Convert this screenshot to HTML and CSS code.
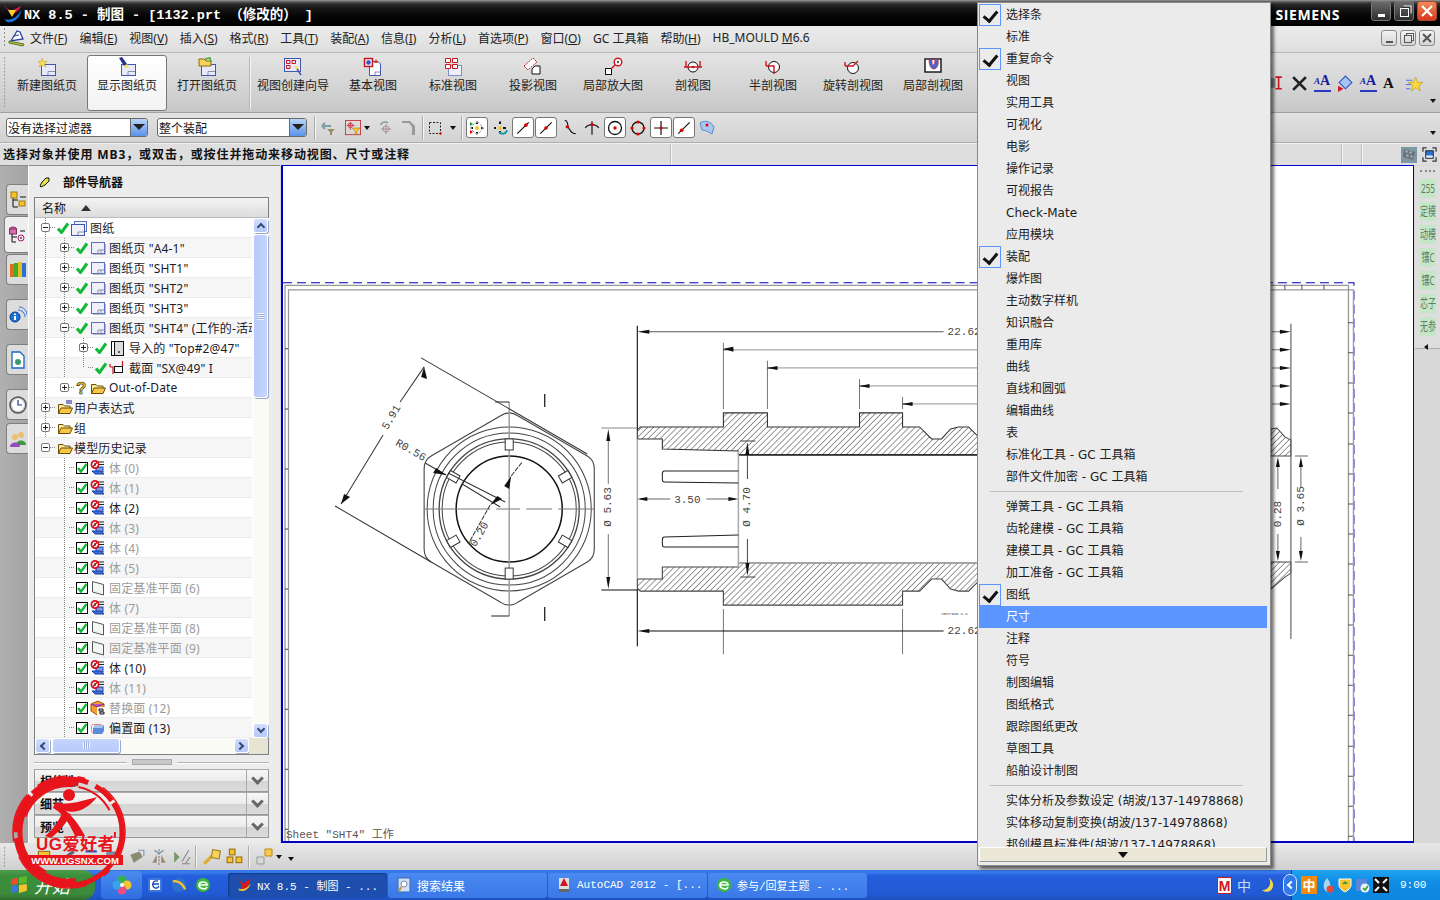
FILE: index.html
```html
<!DOCTYPE html>
<html lang="zh">
<head>
<meta charset="utf-8">
<title>NX 8.5 - 制图</title>
<link rel="stylesheet" href="styles.css">
</head>
<body>
<svg class="defs" width="0" height="0">
  <defs>
    <symbol id="ck" viewBox="0 0 12 12"><path d="M1 6.500 4.500 10.500 11 1.500" fill="none" stroke="#12b838" stroke-width="3"/></symbol>
    <symbol id="cb" viewBox="0 0 12 12"><rect x=".5" y=".5" width="11" height="11" fill="#fff" stroke="#000"/><path d="M2 6 5 9.500 10.500 2" fill="none" stroke="#12b838" stroke-width="2.400"/></symbol>
    <symbol id="pg" viewBox="0 0 16 16"><rect x="1.500" y="2.500" width="13" height="11" fill="#eef1fb" stroke="#5d6fc4"/><path d="M8 13.500V10H14.500M11 10V13.500" fill="none" stroke="#8a8fa8"/><path d="M15.500 4V14.500H3" fill="none" stroke="#b9b9c4"/></symbol>
    <symbol id="pgs" viewBox="0 0 16 16"><rect x="3.500" y="1.500" width="12" height="10" fill="#eef1fb" stroke="#5d6fc4"/><rect x=".5" y="4.500" width="13" height="11" fill="#eef1fb" stroke="#3f55b5"/><path d="M7 15V12H13" fill="none" stroke="#8a8fa8"/></symbol>
    <symbol id="fo" viewBox="0 0 16 16"><path d="M1.500 13.500V4.500H6L7.500 6H13V8" fill="#fbe9a0" stroke="#6b4e00"/><path d="M1.500 13.500 4 8H15.500L13 13.500Z" fill="#f7c64a" stroke="#6b4e00"/></symbol>
    <symbol id="bd" viewBox="0 0 16 16"><rect x="6" y="7" width="7" height="5" fill="#7d9de6" stroke="#1d3fa8"/><path d="M2 11H11L14 14H5Z" fill="#3f6fd8" stroke="#1d3fa8"/><path d="M8 2H14M9 4.500H14" stroke="#222"/><circle cx="5" cy="4.500" r="3.600" fill="#fff" stroke="#d8101c" stroke-width="1.700"/><path d="M2.500 7 7.500 2" stroke="#d8101c" stroke-width="1.500"/><path d="M5 3V6" stroke="#222"/></symbol>
    <symbol id="dp" viewBox="0 0 16 16"><path d="M2.500 1.500 13.500 4.500V15L2.500 12Z" fill="#f1f7f1" stroke="#555"/></symbol>
    <symbol id="tb" viewBox="0 0 22 20"><rect x="5.500" y="7.500" width="14" height="11" fill="#e6eafa" stroke="#4357b0"/><path d="M12 18V14.500H19" fill="none" stroke="#8b8fa8"/></symbol>
    <symbol id="pt" viewBox="0 0 14 14"><path d="M2 12 12 2" stroke="#111"/><circle cx="9.500" cy="4.500" r="1.600" fill="#e00000"/></symbol>
    <symbol id="grip" viewBox="0 0 4 60"><path d="M1.500 0V60" stroke="#8d8d8d" stroke-dasharray="2 2"/></symbol>
  </defs>
</svg>

<header class="titlebar">
  <svg class="tlogo" viewBox="0 0 20 20"><path d="M1 1 9 7 19 2C17 7 14 9 10 10 8 7 5 5 1 1Z" fill="#d41c4c"/><path d="M2 15C8 17 15 14 19 6 19 13 12 20 5 18Z" fill="#1b6ecf"/><path d="M6 6 14 6 10 13Z" fill="#ffcf2c"/></svg>
  <span class="ttext">NX 8.5 - 制图 - [1132.prt （修改的） ]</span>
  <span class="brand">SIEMENS</span>
  <span class="wbtn"><i class="g-min"></i></span>
  <span class="wbtn"><i class="g-res"></i></span>
  <span class="wbtn close"><svg viewBox="0 0 12 12" class="x12"><path d="M1 1 11 11M11 1 1 11" stroke="#fff" stroke-width="2.200"/></svg></span>
</header>

<nav class="menubar">
  <svg class="grip14" viewBox="0 0 4 20"><path d="M1.500 0V20" stroke="#8d8d8d" stroke-dasharray="2 2"/></svg>
  <svg class="mlogo" viewBox="0 0 18 18"><path d="M3 12 9 2 12 3 15 10Z" fill="#fff" stroke="#2b3f9e" stroke-width="1.300"/><path d="M1 12 16 15 15 17 1 14Z" fill="#e0b83c" stroke="#4a7a2a"/><path d="M6 7 11 6" stroke="#2b3f9e"/></svg>
  <div class="mitems">
    <span>文件(<u>F</u>)</span><span>编辑(<u>E</u>)</span><span>视图(<u>V</u>)</span><span>插入(<u>S</u>)</span><span>格式(<u>R</u>)</span><span>工具(<u>T</u>)</span><span>装配(<u>A</u>)</span><span>信息(<u>I</u>)</span><span>分析(<u>L</u>)</span><span>首选项(<u>P</u>)</span><span>窗口(<u>O</u>)</span><span>GC 工具箱</span><span>帮助(<u>H</u>)</span><span>HB_MOULD <u>M</u>6.6</span>
  </div>
  <div class="mdi">
    <span class="mbtn"><i class="m-min"></i></span><span class="mbtn"><i class="m-res"></i></span>
    <span class="mbtn"><svg viewBox="0 0 10 10" class="x10"><path d="M1 1 9 9M9 1 1 9" stroke="#555" stroke-width="2"/></svg></span>
  </div>
</nav>

<section class="bigbar">
  <svg class="grip60" viewBox="0 0 4 60"><use href="#grip"/></svg>
  <div class="bb"><svg class="bi" viewBox="0 0 22 20"><use href="#tb"/><path d="M6 1 7.500 5 11 4 8.500 7 10 10 6.500 8 3 10 4.500 7 2 4 5 5Z" fill="#ffe14a" stroke="#b9a020" stroke-width=".5"/></svg><span>新建图纸页</span></div>
  <div class="bb on"><svg class="bi" viewBox="0 0 22 20"><use href="#tb"/><path d="M3 1 6 0 11 7 8 9Z" fill="#23308f"/><path d="M8 9 11 7 13 11 9 11Z" fill="#f2e26a"/></svg><span>显示图纸页</span></div>
  <div class="bb"><svg class="bi" viewBox="0 0 22 20"><use href="#tb"/><path d="M3 9V2H8L10 4H15V9Z" fill="#f7d35c" stroke="#8a6a10"/><path d="M9 2 14 1 15 5" fill="none" stroke="#3fae2c" stroke-width="1.500"/></svg><span>打开图纸页</span></div>
  <span class="bsep"></span>
  <div class="bb"><svg class="bi" viewBox="0 0 22 20"><rect x="2.500" y="1.500" width="16" height="13" fill="#e6eafa" stroke="#4357b0"/><path d="M4.500 3.500H8V6.500H4.500ZM10 3.500H13.500V6.500H10ZM4.500 8.500H8V11.500H4.500Z" fill="none" stroke="#c8141c"/><path d="M12 9 15 9 17 13 14 12Z" fill="#ffe14a"/><path d="M15 12 19 18" stroke="#4357b0" stroke-width="1.500"/></svg><span>视图创建向导</span></div>
  <div class="bb"><svg class="bi" viewBox="0 0 22 20"><path d="M7.500 4.500H16L18.500 7V18.500H7.500Z" fill="#fff" stroke="#4357b0"/><path d="M13 18V15H18" fill="none" stroke="#8b8fa8"/><rect x="2.500" y="1.500" width="8" height="8" fill="#e6eafa" stroke="#c8141c" stroke-width="1.400"/><circle cx="6.500" cy="5.500" r="2.200" fill="#3553c8"/><path d="M14 2 16 6H12Z" fill="#d8401c"/></svg><span>基本视图</span></div>
  <div class="bb"><svg class="bi" viewBox="0 0 22 20"><rect x="6.500" y="8.500" width="13" height="10" fill="#eef1fb" stroke="#7f8ccf"/><path d="M3.500 1.500H8.500V5.500H3.500ZM10.500 1.500H15.500V5.500H10.500ZM3.500 7.500H8.500V11.500H3.500ZM10.500 7.500H15.500V11.500H10.500Z" fill="#fff" stroke="#c8141c"/></svg><span>标准视图</span></div>
  <div class="bb"><svg class="bi" viewBox="0 0 22 20"><path d="M2 9 11 1 15 5 6 13Z" fill="#fff" stroke="#d01420" stroke-dasharray="2 1"/><path d="M10 17V12L13 9H18V17Z" fill="#fff" stroke="#111"/></svg><span>投影视图</span></div>
  <div class="bb"><svg class="bi" viewBox="0 0 22 20"><rect x="3.500" y="11.500" width="6" height="6" fill="#fff" stroke="#111"/><path d="M9 12 14 7" stroke="#d01420" stroke-width="1.400"/><circle cx="16" cy="5" r="3.800" fill="#fff" stroke="#d01420" stroke-width="1.400"/><circle cx="16" cy="5" r="1.200" fill="#555"/></svg><span>局部放大图</span></div>
  <div class="bb"><svg class="bi" viewBox="0 0 22 20"><circle cx="11" cy="10" r="5" fill="#fff" stroke="#111"/><circle cx="11" cy="10" r="1.300" fill="#333"/><path d="M2 10H20M4 10V4M18 10V4" fill="none" stroke="#d01420" stroke-width="1.400"/></svg><span>剖视图</span></div>
  <div class="bb"><svg class="bi" viewBox="0 0 22 20"><circle cx="12" cy="10" r="5.500" fill="#fff" stroke="#111"/><path d="M4 9H12V17M4 9V4" fill="none" stroke="#d01420" stroke-width="1.400"/></svg><span>半剖视图</span></div>
  <div class="bb"><svg class="bi" viewBox="0 0 22 20"><circle cx="11" cy="11" r="5.500" fill="#fff" stroke="#111"/><path d="M3 9H11L16 4M3 9V5" fill="none" stroke="#d01420" stroke-width="1.400"/></svg><span>旋转剖视图</span></div>
  <div class="bb"><svg class="bi" viewBox="0 0 22 20"><rect x="3" y="2" width="16" height="13" fill="#fff" stroke="#111" stroke-width="1.400"/><path d="M7 2C7 9 9 12 12 12S17 8 16 2H13C13 6 12 8 11 8S10 5 10 2Z" fill="#4a66cc" stroke="#d01420" stroke-width=".6"/></svg><span>局部剖视图</span></div>
  <div class="rgroup">
    <svg class="ri" viewBox="0 0 16 16"><rect x="0" y="3" width="7" height="9" fill="#8a8a8a"/><path d="M10 2V13M7 2H13M7 13H13" stroke="#c8141c" stroke-width="1.500"/></svg>
    <svg class="ri" viewBox="0 0 16 16"><path d="M2 2 14 14M14 2 2 14" stroke="#222" stroke-width="2.600"/></svg>
    <span class="ria">A<i>A</i></span>
    <svg class="ri" viewBox="0 0 16 16"><path d="M8 1 14 7 8 13 2 7Z" fill="#a8c4f4" stroke="#2b52c0"/><path d="M1 10 6 13 1 16Z" fill="#d01420"/></svg>
    <span class="ria">A<i>A</i></span>
    <span class="rib">A</span>
    <svg class="ri" viewBox="0 0 16 16"><path d="M9 2 11 7H16L12 10 13.500 15 9 12 5 15 6.500 10 2 7H7Z" fill="#ffd93a" stroke="#b08a10" stroke-width=".5"/><path d="M0 5H6M0 9H5M0 13H4" stroke="#4a7ae0"/></svg>
  </div>
  <i class="more"></i>
</section>

<section class="selbar">
  <div class="combo c1"><span>没有选择过滤器</span><b></b></div>
  <div class="combo c2"><span>整个装配</span><b></b></div>
  <span class="vsep s1"></span>
  <span class="ti"><svg viewBox="0 0 16 16"><path d="M2 6H11M2 6 5 3M2 6 5 9" stroke="#7e9ca8" stroke-width="2" fill="none"/><path d="M7 9H15L12 12V15H10V12Z" fill="#9a8a6a"/></svg></span>
  <span class="ti m3"><svg viewBox="0 0 18 18"><rect x=".5" y=".5" width="17" height="16" fill="none" stroke="#c8323c"/><path d="M6 2V11M2 6H11" stroke="#c8323c"/><circle cx="6" cy="6" r="2.500" fill="none" stroke="#c8323c"/><path d="M8 9H17L13.500 12.500V16H11.500V12.500Z" fill="#f4c430" stroke="#8a6a10" stroke-width=".5"/></svg></span>
  <i class="dn d1"></i>
  <span class="ti m5"><svg viewBox="0 0 16 16"><circle cx="8" cy="9" r="3" fill="none" stroke="#a89aa0"/><path d="M8 4V14M3 9H13" stroke="#b08a8a"/><path d="M3 5C3 2 8 1 10 3" stroke="#7e9ca8" stroke-width="1.500" fill="none"/></svg></span>
  <span class="ti"><svg viewBox="0 0 16 16"><path d="M1 3 8 3 11 7V15H14V6L9 1 1 1Z" fill="#9a9a9a"/></svg></span>
  <span class="vsep s2"></span>
  <span class="ti"><svg viewBox="0 0 16 16"><rect x="2.500" y="2.500" width="11" height="11" fill="none" stroke="#222" stroke-dasharray="2 1.500"/><circle cx="13.500" cy="13.500" r="1.200" fill="#e00000"/></svg></span>
  <i class="dn d2"></i>
  <span class="vsep s3"></span>
  <span class="ti box"><svg viewBox="0 0 16 16"><path d="M8 1 15 8 8 15 1 8Z" fill="none" stroke="#777" stroke-dasharray="1 1"/><circle cx="8" cy="8" r="2" fill="#f4c430"/><path d="M8 2.500V4M8 12V13.500M2.500 8H4M12 8H13.500" stroke="#111" stroke-width="2"/><path d="M1 2 4 4 1 6Z" fill="#10a030"/><path d="M1 10 4 12 1 14Z" fill="#e00000"/></svg></span>
  <span class="ti"><svg viewBox="0 0 16 16"><path d="M8 1.500V4M8 11V13.500M2 8H4M11 8H14" stroke="#111" stroke-width="2"/><circle cx="8" cy="8" r="2" fill="#f4c430"/><path d="M7 12C10 15 14 14 15 10" stroke="#1a9a9a" stroke-width="2" fill="none"/></svg></span>
  <span class="ti box"><svg viewBox="0 0 14 14"><use href="#pt"/></svg></span>
  <span class="ti box"><svg viewBox="0 0 14 14"><path d="M2 12 12 2" stroke="#111"/><circle cx="7" cy="7" r="1.600" fill="#e00000"/></svg></span>
  <span class="ti"><svg viewBox="0 0 14 14"><path d="M3 0C7 0 5 7 8 9 9 11 11 12 13 12" stroke="#111" fill="none"/><circle cx="5.500" cy="6" r="1.500" fill="#e00000"/></svg></span>
  <span class="ti"><svg viewBox="0 0 14 14"><path d="M1 7C4 3 10 3 13 7M7 1V13" stroke="#111" fill="none"/><circle cx="7" cy="4" r="1.400" fill="#e00000"/></svg></span>
  <span class="ti box"><svg viewBox="0 0 16 16"><circle cx="8" cy="8" r="6.500" fill="none" stroke="#111" stroke-width="1.300"/><circle cx="8" cy="8" r="1.700" fill="#e00000"/></svg></span>
  <span class="ti"><svg viewBox="0 0 16 16"><circle cx="8" cy="8" r="6" fill="none" stroke="#111" stroke-width="1.300"/><g fill="#e00000"><circle cx="8" cy="2" r="1.600"/><circle cx="8" cy="14" r="1.600"/><circle cx="2" cy="8" r="1.600"/><circle cx="14" cy="8" r="1.600"/></g></svg></span>
  <span class="ti box"><svg viewBox="0 0 16 16"><path d="M8 1V15M1 8H15" stroke="#111" stroke-width="1.200"/><circle cx="8" cy="8" r="1.500" fill="#e00000"/></svg></span>
  <span class="ti box"><svg viewBox="0 0 14 14"><path d="M2 12 12 2" stroke="#111"/><circle cx="5" cy="9" r="1.600" fill="#e00000"/></svg></span>
  <span class="ti"><svg viewBox="0 0 16 16"><path d="M1 3C5 0 12 1 15 7L13 14C9 11 4 10 3 10Z" fill="#a8c8f0" stroke="#5a8ad0"/><circle cx="8" cy="5" r="1.500" fill="#e00000"/></svg></span>
  <i class="more m2"></i>
</section>

<section class="cue">
  <strong>选择对象并使用 MB3，或双击，或按住并拖动来移动视图、尺寸或注释</strong>
  <span class="cdiv d-a"></span><span class="cdiv d-b"></span><span class="cdiv d-c"></span>
  <svg class="flag" viewBox="0 0 16 16"><rect width="16" height="16" fill="#7d98a4"/><path d="M3 2 14 5 12 13 2 10Z" fill="#68727a"/><path d="M5 3 7 4 6 6 4 5ZM9 4 11 5 10 7 8 6ZM6 7 8 8 7 10 5 9ZM10 8 12 9 11 11 9 10Z" fill="#a8b0b4"/></svg>
  <svg class="fit" viewBox="0 0 16 16"><path d="M1 5V1H5M11 1H15V5M15 11V15H11M5 15H1V11" fill="none" stroke="#333" stroke-width="1.300"/><rect x="4" y="4" width="8" height="8" fill="#2f6fd0" stroke="#222"/><rect x="4.500" y="9" width="7" height="2.500" fill="#dfe8f8"/></svg>
</section>

<main class="work">
  <aside class="tabs">
    <div class="tab"><svg viewBox="0 0 18 18"><path d="M4 7V16M4 9H9M4 16H9M11 6H17" fill="none" stroke="#111"/><rect x="2" y="1" width="6" height="6" fill="#f4c430" stroke="#9a7a10"/><rect x="10" y="10" width="6" height="5" fill="#f4c430" stroke="#9a7a10"/></svg></div>
    <div class="tab active"><svg viewBox="0 0 18 18"><ellipse cx="5" cy="3" rx="3.500" ry="2" fill="#d66cae" stroke="#803060"/><rect x="1.500" y="3" width="7" height="5" fill="#d66cae" stroke="#803060"/><path d="M4 8V16M4 11H9M4 16H8M12 5H17" stroke="#111" fill="none"/><circle cx="13" cy="12" r="3" fill="none" stroke="#a02070"/><circle cx="13" cy="12" r="1" fill="#a02070"/></svg></div>
    <div class="tab"><svg viewBox="0 0 18 18"><rect x="1" y="3" width="4" height="13" fill="#e66a1c"/><rect x="5" y="2" width="4" height="14" fill="#3fae2c"/><rect x="9" y="1" width="4" height="15" fill="#e6c11c"/><rect x="13" y="2" width="4" height="14" fill="#2b6fd8"/></svg></div>
    <div class="tab g1"><svg viewBox="0 0 18 18"><circle cx="6" cy="11" r="5" fill="#1c72d8" stroke="#0a3a8a"/><rect x="5" y="10" width="2" height="4" fill="#fff"/><rect x="5" y="7.500" width="2" height="1.500" fill="#fff"/><path d="M9 4C13 4 16 7 16 11M10 1C15 1 18 5 18 9" fill="none" stroke="#2b70d8"/></svg></div>
    <div class="tab g1"><svg viewBox="0 0 18 18"><path d="M3 1H11L15 5V17H3Z" fill="#fff" stroke="#1a66c8" stroke-width="1.300"/><circle cx="9" cy="11" r="3" fill="#3a9a6a"/></svg></div>
    <div class="tab g1"><svg viewBox="0 0 18 18"><circle cx="9" cy="9" r="8" fill="#c8d4dc" stroke="#555" stroke-width="1.500"/><circle cx="9" cy="9" r="6" fill="#fff"/><path d="M9 4V9H13" fill="none" stroke="#1a3a8a" stroke-width="1.200"/></svg></div>
    <div class="tab g2"><svg viewBox="0 0 18 18"><circle cx="12" cy="5" r="3" fill="#e8c070"/><path d="M7 15C7 9 17 9 17 15Z" fill="#3a9a3a"/><circle cx="6" cy="7" r="3" fill="#e8c070"/><path d="M1 17C1 11 11 11 11 17Z" fill="#9a4ac0"/></svg></div>
  </aside>

  <section class="panel">
    <div class="phead">
      <svg class="pico" viewBox="0 0 12 12"><path d="M1 10 3 6 7 2 10 2 10 5 6 9 2 11Z" fill="#e8e04a" stroke="#111"/></svg>
      <strong>部件导航器</strong>
    </div>
    <div class="tree">
      <div class="thead"><span>名称</span><i class="up"></i></div>
      <div class="tbody">
        <div class="rows">
          <div class="row v0 l0"><span class="exp minus"></span><span class="dash"></span><svg class="c"><use href="#ck"/></svg><svg class="ic"><use href="#pgs"/></svg><span class="t">图纸</span></div>
          <div class="row alt v01 l1"><span class="exp plus"></span><span class="dash"></span><svg class="c"><use href="#ck"/></svg><svg class="ic"><use href="#pg"/></svg><span class="t">图纸页 "A4-1"</span></div>
          <div class="row v01 l1"><span class="exp plus"></span><span class="dash"></span><svg class="c"><use href="#ck"/></svg><svg class="ic"><use href="#pg"/></svg><span class="t">图纸页 "SHT1"</span></div>
          <div class="row alt v01 l1"><span class="exp plus"></span><span class="dash"></span><svg class="c"><use href="#ck"/></svg><svg class="ic"><use href="#pg"/></svg><span class="t">图纸页 "SHT2"</span></div>
          <div class="row v01 l1"><span class="exp plus"></span><span class="dash"></span><svg class="c"><use href="#ck"/></svg><svg class="ic"><use href="#pg"/></svg><span class="t">图纸页 "SHT3"</span></div>
          <div class="row alt v01 l1"><span class="exp minus"></span><span class="dash"></span><svg class="c"><use href="#ck"/></svg><svg class="ic"><use href="#pg"/></svg><span class="t">图纸页 "SHT4" (工作的-活动的)</span></div>
          <div class="row v012 l2"><span class="exp plus"></span><span class="dash"></span><svg class="c"><use href="#ck"/></svg><svg class="ic"><rect x="2.500" y="1.500" width="12" height="14" fill="#ddd" stroke="#111"/><rect x="2.500" y="1.500" width="3" height="14" fill="#fff" stroke="#111"/><circle cx="10" cy="12" r="1" fill="#333"/></svg><span class="t s2">导入的 "Top#2@47"</span></div>
          <div class="row alt v012e l2"><span class="exp none"></span><span class="dash"></span><svg class="c"><use href="#ck"/></svg><svg class="ic"><path d="M1 7H4V14M1 7V4" stroke="#c8141c" fill="none" stroke-width="1.200"/><rect x="5.500" y="6.500" width="8" height="6" fill="#fff" stroke="#111"/><path d="M13.500 6V1" stroke="#c8141c" stroke-width="1.200"/></svg><span class="t s2">截面 "SX@49" I</span></div>
          <div class="row v0 l1"><span class="exp plus"></span><span class="dash"></span><svg class="c q" viewBox="0 0 12 16"><text x="0" y="14" class="qm">?</text></svg><svg class="ic"><use href="#fo"/></svg><span class="t">Out-of-Date</span></div>
          <div class="row alt v0 l0"><span class="exp plus"></span><span class="dash"></span><svg class="ic fo0"><use href="#fo"/><path d="M9 1H15M9 3H15" stroke="#1a1a8a"/></svg><span class="t">用户表达式</span></div>
          <div class="row v0 l0"><span class="exp plus"></span><span class="dash"></span><svg class="ic fo0"><use href="#fo"/></svg><span class="t">组</span></div>
          <div class="row alt l0"><span class="exp minus"></span><span class="dash"></span><svg class="ic fo0"><use href="#fo"/></svg><span class="t">模型历史记录</span></div>
          <div class="row v1 l1"><span class="exp none"></span><span class="dash"></span><svg class="c"><use href="#cb"/></svg><svg class="ic"><use href="#bd"/></svg><span class="t dim">体 (0)</span></div>
          <div class="row alt v1 l1"><span class="exp none"></span><span class="dash"></span><svg class="c"><use href="#cb"/></svg><svg class="ic"><use href="#bd"/></svg><span class="t dim">体 (1)</span></div>
          <div class="row v1 l1"><span class="exp none"></span><span class="dash"></span><svg class="c"><use href="#cb"/></svg><svg class="ic"><use href="#bd"/></svg><span class="t">体 (2)</span></div>
          <div class="row alt v1 l1"><span class="exp none"></span><span class="dash"></span><svg class="c"><use href="#cb"/></svg><svg class="ic"><use href="#bd"/></svg><span class="t dim">体 (3)</span></div>
          <div class="row v1 l1"><span class="exp none"></span><span class="dash"></span><svg class="c"><use href="#cb"/></svg><svg class="ic"><use href="#bd"/></svg><span class="t dim">体 (4)</span></div>
          <div class="row alt v1 l1"><span class="exp none"></span><span class="dash"></span><svg class="c"><use href="#cb"/></svg><svg class="ic"><use href="#bd"/></svg><span class="t dim">体 (5)</span></div>
          <div class="row v1 l1"><span class="exp none"></span><span class="dash"></span><svg class="c"><use href="#cb"/></svg><svg class="ic"><use href="#dp"/></svg><span class="t dim">固定基准平面 (6)</span></div>
          <div class="row alt v1 l1"><span class="exp none"></span><span class="dash"></span><svg class="c"><use href="#cb"/></svg><svg class="ic"><use href="#bd"/></svg><span class="t dim">体 (7)</span></div>
          <div class="row v1 l1"><span class="exp none"></span><span class="dash"></span><svg class="c"><use href="#cb"/></svg><svg class="ic"><use href="#dp"/></svg><span class="t dim">固定基准平面 (8)</span></div>
          <div class="row alt v1 l1"><span class="exp none"></span><span class="dash"></span><svg class="c"><use href="#cb"/></svg><svg class="ic"><use href="#dp"/></svg><span class="t dim">固定基准平面 (9)</span></div>
          <div class="row v1 l1"><span class="exp none"></span><span class="dash"></span><svg class="c"><use href="#cb"/></svg><svg class="ic"><use href="#bd"/></svg><span class="t">体 (10)</span></div>
          <div class="row alt v1 l1"><span class="exp none"></span><span class="dash"></span><svg class="c"><use href="#cb"/></svg><svg class="ic"><use href="#bd"/></svg><span class="t dim">体 (11)</span></div>
          <div class="row v1 l1"><span class="exp none"></span><span class="dash"></span><svg class="c"><use href="#cb"/></svg><svg class="ic"><path d="M1 4 8 1 14 4V11L7 15 1 11Z" fill="#f4a030" stroke="#a05010"/><path d="M1 4 7 7 14 4" fill="#c050c0" stroke="#803080"/><rect x="7" y="7" width="8" height="8" fill="#fff"/><path d="M9 9H13V11H9ZM10 12H14V14H10Z" fill="none" stroke="#111"/></svg><span class="t dim">替换面 (12)</span></div>
          <div class="row alt v1 l1"><span class="exp none"></span><span class="dash"></span><svg class="c"><use href="#cb"/></svg><svg class="ic"><rect x="1.500" y="4.500" width="11" height="8" rx="2" fill="#fff" stroke="#f08080"/><path d="M5 5H14V11L12 14H3V8Z" fill="#5a8ae0"/><path d="M5 5 3 8H12L14 5" fill="#a8c4f4"/></svg><span class="t">偏置面 (13)</span></div>
        </div>
        <div class="vscroll">
          <span class="sb"><i class="ch-up"></i></span>
          <span class="thumb"><i class="ridges"></i></span>
          <span class="track"></span>
          <span class="sb"><i class="ch-dn"></i></span>
        </div>
      </div>
      <div class="hscroll">
        <span class="sb"><i class="ch-l"></i></span>
        <span class="hthumb"><i class="hridges"></i></span>
        <span class="htrack"></span>
        <span class="sb"><i class="ch-r"></i></span>
        <span class="corner"></span>
      </div>
    </div>
    <div class="split"><span></span><b></b><span></span></div>
    <div class="acc"><strong>相依性</strong><em><i class="chev"></i></em></div>
    <div class="acc"><strong>细节</strong><em><i class="chev"></i></em></div>
    <div class="acc"><strong>预览</strong><em><i class="chev"></i></em></div>
  </section>

  <section class="gfx">
    <svg class="sheet" viewBox="283 168 1129 673">
      <defs>
        <pattern id="h" width="4.200" height="4.200" patternUnits="userSpaceOnUse" patternTransform="rotate(45)"><rect width="5" height="5" fill="#fff"/><path d="M0 0V5" stroke="#555" stroke-width="1.200"/></pattern>
      </defs>
      <!-- sheet frame -->
      <g fill="none">
        <path d="M283 284H1353V843" stroke="#0000c0" stroke-dasharray="9 5"/>
        <path d="M285 843V286.500H1347.500V843M288.500 843V291H1352.500V843" stroke="#999" stroke-width="1.300"/>
        <path d="M1347 324H1352M1347 354H1352M1347 384H1352M1347 414H1352M1347 445H1352M1347 475H1352M1347 505H1352M1347 535H1352M1347 565H1352M1347 596H1352M1347 626H1352M1347 656H1352M1347 686H1352M1347 716H1352M1347 747H1352M1347 777H1352M1347 807H1352M1347 837H1352" stroke="#555"/>
        <path d="M1301 286V291M1323 286V291M1284 286V291M1054 286V291" stroke="#555"/>
        <path d="M285 590H288M285 650H288M285 710H288M285 770H288M285 830H288M285 530H288M285 470H288M285 410H288M285 350H288" stroke="#444"/>
      </g>
      <!-- hex view -->
      <g fill="none" stroke="#444" stroke-width="1">
        <path d="M500 417Q509 411 518 417L587 457Q594 461 594 470V550Q594 559 587 563L518 603Q509 609 500 603L431 563Q424 559 424 550V470Q424 461 431 457Z" stroke-width="1.100"/>
        <circle cx="509" cy="510" r="82"/><circle cx="509" cy="510" r="76"/><circle cx="509" cy="510" r="70" stroke-width="1.300"/><circle cx="509" cy="510" r="67"/><circle cx="509" cy="510" r="53" stroke="#111" stroke-width="1.500"/>
        <path d="M424 510H490M496 510H520M526 510H552M558 510H594" stroke="#777"/>
        <path d="M509 403V617" stroke="#999" stroke-width="1.400"/>
        <path d="M495 403H509M491 617H509" stroke="#222"/>
        <g fill="#fff" stroke="#333">
          <rect x="505" y="440" width="8" height="11"/><rect x="505" y="569" width="8" height="11"/>
          <rect x="505" y="440" width="8" height="11" transform="rotate(60 509 510)"/><rect x="505" y="440" width="8" height="11" transform="rotate(120 509 510)"/><rect x="505" y="440" width="8" height="11" transform="rotate(240 509 510)"/><rect x="505" y="440" width="8" height="11" transform="rotate(300 509 510)"/>
        </g>
        <path d="M544.500 395V408M544.500 608V622" stroke="#111" stroke-width="1.200"/>
        <path d="M421 359 587 455M335 507 431 563" stroke="#333"/>
        <path d="M400 403 424 368M341 505 383 436" stroke="#333"/>
        <path d="M448 474 505 503M462 485 500 508" stroke="#333"/>
        <path d="M425 464 446 476" stroke="#333"/>
        <path d="M511 477 522 463M490 506 468 545" stroke="#333" stroke-dasharray="5 1"/>
      </g>
      <g fill="#111"><path d="M424 368 421 378 427 380ZM341 505 344 495 350 498ZM446 476 436 469 433 474ZM511 477 504 487 509 490ZM490 506 497 497 502 500Z"/></g>
      <g class="cad">
        <text transform="translate(394 420) rotate(-60)" text-anchor="middle">5.91</text>
        <text transform="translate(409 454) rotate(30)" text-anchor="middle">R0.56</text>
        <text transform="translate(482 537) rotate(-60)" text-anchor="middle">0.20</text>
        <text transform="translate(611 508) rotate(-90)" text-anchor="middle">Ø 5.63</text>
        <text transform="translate(750 508) rotate(-90)" text-anchor="middle">Ø 4.70</text>
        <text x="687" y="504" text-anchor="middle">3.50</text>
        <text x="947" y="336">22.62</text>
        <text x="947" y="635">22.62</text>
        <text transform="translate(1280 515) rotate(-90)" text-anchor="middle">0.28</text>
        <text transform="translate(1303 507) rotate(-90)" text-anchor="middle">Ø 3.65</text>
        <text x="941" y="616" class="tiny">SECTION C-C</text>
        <text x="286" y="839" class="sheetcap">Sheet "SHT4" 工作</text>
      </g>
      <!-- section view -->
      <path d="M637 440V431L640 428H723V414H767V428H859V414H902V428H919L931 440H941L950 430 958 428H968L980 440V456H738V452L662 450V440Z" fill="url(#h)" stroke="#333" stroke-width="1.100"/>
      <path d="M637 580V589L640 592H723V606H902V592H919L931 580H941L950 590 958 592H968L980 580V564H738V568H662V580Z" fill="url(#h)" stroke="#444" stroke-width="1.100"/>
      <path d="M1270 430 1276 429 1284 438 1290 441V457H1270ZM1270 590 1284 578 1290 574V563H1270Z" fill="url(#h)" stroke="#444"/>
      <g fill="none" stroke="#222">
        <path d="M738 456H980" stroke="#111" stroke-width="1.300"/>
        <path d="M738 564H980" stroke="#aaa" stroke-width="1.300"/>
        <path d="M637 440V580M738 452V568" stroke="#aaa" stroke-width="1.500"/>
        <path d="M738 472H664Q662 472 662 475V480Q662 483 664 483L738 484M738 536 664 538Q662 538 662 541V545Q662 548 664 548H738"/>
        <path d="M637 327V431M637 590V647" stroke="#111" stroke-width="1.100"/>
        <path d="M723 344V410M767 362V410M859 380V410M902 398V410M723 610V655M902 610V655" stroke="#777"/>
        <path d="M647 333H943" stroke="#555"/>
        <path d="M733 351H980M777 369H980M869 387H980M912 405H980" stroke="#aaa" stroke-width="1.300"/>
        <path d="M733 351H723M777 369H767M869 387H859M912 405H902" stroke="#111"/>
        <path d="M647 632H943" stroke="#111"/>
        <path d="M1271 333H1280M1271 351H1280M1271 369H1280M1271 387H1280M1271 405H1280" stroke="#777"/>
        <path d="M1290 325V640" stroke="#666" stroke-width="1.200"/>
        <path d="M601 429H637" stroke="#888"/><path d="M601 591H637" stroke="#111"/>
        <path d="M608 440V485M608 535V580" stroke="#777"/>
        <path d="M640 500H670M706 500H735" stroke="#666"/>
        <path d="M747 456V480M747 540V566M740 442H755M740 578H755" stroke="#444"/>
        <path d="M1277 463V490M1277 535V556M1300 462V488M1300 538V558M1294 457H1307M1294 563H1307" stroke="#666"/>
      </g>
      <g fill="#111"><path d="M637 333 649 331V335ZM637 632 649 630V634ZM637 500 647 498V502ZM738 500 728 498V502ZM608 430 606 442H610ZM608 590 606 578H610ZM747 443 745 456H749ZM747 577 745 564H749ZM1290 333 1279 331V335ZM1290 351 1279 349V353ZM1290 369 1279 367V371ZM1290 387 1279 385V389ZM1290 405 1279 403V407ZM1277 458 1275 468H1279ZM1277 562 1275 552H1279ZM1300 458 1298 468H1302ZM1300 562 1298 552H1302Z"/><path d="M723 350 733 348V353Z"/><path d="M767 369 777 367V371ZM859 387 869 385V389ZM902 405 912 403V407Z"/></g>
    </svg>
  </section>

  <aside class="rstrip">
    <div class="rbox">
      <span class="rgrip"></span>
      <span class="gt">255</span><span class="gt">定模</span><span class="gt">动模</span><span class="gt">镶C</span><span class="gt">镶C</span><span class="gt">芯子</span><span class="gt">无参</span>
      <i class="lft"></i>
    </div>
  </aside>
</main>

<footer class="btool">
  <svg class="grip22" viewBox="0 0 4 22"><path d="M1.500 0V22" stroke="#8d8d8d" stroke-dasharray="2 2"/></svg>
  <span class="bt spa"><svg viewBox="0 0 16 16"><rect x="3" y="3" width="10" height="10" fill="#f4c430" stroke="#a07010"/></svg></span>
  <span class="bt"><svg viewBox="0 0 16 16"><path d="M2 12 14 3" stroke="#667" stroke-width="3"/></svg></span>
  <span class="bt"><svg viewBox="0 0 16 16"><rect x="2" y="6" width="10" height="8" fill="#f4c430"/><path d="M4 3H14" stroke="#2b52c0" stroke-width="2"/></svg></span>
  <span class="bt"><svg viewBox="0 0 16 16"><rect x="2" y="3" width="12" height="10" fill="#7a8aa0"/></svg></span>
  <span class="bt"><svg viewBox="0 0 16 16"><path d="M3 6 11 3 14 8 6 13Z" fill="#8a8a70"/><path d="M10 2 15 2 15 7" stroke="#7a98b8" fill="none"/></svg></span>
  <span class="bt"><svg viewBox="0 0 16 16"><path d="M8 1V15" stroke="#7a7a7a" stroke-dasharray="2 1"/><path d="M2 13 6 6V13ZM14 13 10 6V13Z" fill="#9a8a70"/><path d="M4 2 8 5 12 2" stroke="#6a8aa8" fill="none"/></svg></span>
  <span class="bt"><svg viewBox="0 0 16 16"><path d="M1 3 6 8 1 13Z" fill="#7a9a6a"/><path d="M8 12 14 2M11 14 15 8M8 14H15" stroke="#888"/></svg></span>
  <span class="bsep2"></span>
  <span class="bt"><svg viewBox="0 0 16 16"><path d="M1 14 8 7" stroke="#d8b030" stroke-width="3"/><rect x="8" y="2" width="7" height="7" fill="#f7d35c" stroke="#a08020" transform="rotate(10 11 5)"/></svg></span>
  <span class="bt"><svg viewBox="0 0 16 16"><rect x="3" y="1" width="5" height="5" fill="#f4c430" stroke="#a07010"/><rect x="1" y="8" width="5" height="5" fill="#f4c430" stroke="#a07010"/><rect x="9" y="8" width="5" height="5" fill="#f4c430" stroke="#a07010"/></svg></span>
  <span class="bsep2"></span>
  <span class="bt"><svg viewBox="0 0 18 18"><path d="M9 1H16V8H9Z" fill="#f7c84a" stroke="#c08a10"/><path d="M1 9H8V16H1Z" fill="#d8d8d8" stroke="#999"/></svg></span>
  <i class="dn d3"></i><i class="dn d4"></i>
</footer>

<nav class="taskbar">
  <div class="start"><svg class="xp" viewBox="0 0 16 16"><path d="M1 3 7 1V7L1 8Z" fill="#e8502c"/><path d="M8 1 15 0V6L8 7Z" fill="#5cb82c"/><path d="M1 9 7 8V14L1 15Z" fill="#3a78e0"/><path d="M8 8 15 7V13L8 15Z" fill="#f4c430"/></svg><span>开始</span></div>
  <div class="ql">
    <span class="qbox"><svg viewBox="0 0 20 20"><circle cx="10" cy="5" r="4.500" fill="#38b04a"/><circle cx="15" cy="10" r="4.500" fill="#f4c430"/><circle cx="10" cy="15" r="4.500" fill="#ee4a8a"/><circle cx="5" cy="10" r="4.500" fill="#3aa0e8"/><circle cx="10" cy="10" r="2" fill="#fff"/></svg></span>
    <svg class="qi" viewBox="0 0 16 16"><rect x="1" y="1" width="14" height="14" rx="2" fill="#3a78e0"/><rect x="3" y="3" width="10" height="10" fill="#fff"/><path d="M11 4C7 3 5 6 6 9S11 12 12 9M6 7H12" stroke="#1a4ac0" fill="none" stroke-width="1.300"/></svg>
    <svg class="qi" viewBox="0 0 18 18"><circle cx="9" cy="9" r="8" fill="#2f6fd0"/><path d="M2 5C7 3 14 8 16 14" stroke="#f4c430" stroke-width="2.500" fill="none"/></svg>
    <svg class="qi" viewBox="0 0 16 16"><circle cx="8" cy="8" r="7" fill="#3cb83c"/><path d="M3.500 8H12C12 4 4 4 4 8S11 13 12 10" stroke="#fff" stroke-width="1.700" fill="none"/></svg>
  </div>
  <div class="task cur"><svg class="tk" viewBox="0 0 20 20"><path d="M2 2 9 8 18 2C18 10 13 17 5 17 8 13 7 8 2 2Z" fill="#d41c1c"/><path d="M3 14C8 17 14 14 18 8 17 14 11 19 4 17Z" fill="#f4c430"/></svg><span>NX 8.5 - 制图 - ...</span></div>
  <div class="task"><svg class="tk" viewBox="0 0 16 16"><rect x="2" y="1" width="12" height="14" fill="#cfe0f8" stroke="#3a68b0"/><circle cx="8" cy="7" r="3" fill="#fff" stroke="#7a8aa0"/><path d="M5 10 3 14" stroke="#c09030" stroke-width="2"/></svg><span class="zh">搜索结果</span></div>
  <div class="task"><svg class="tk" viewBox="0 0 16 16"><rect x="3" y="1" width="10" height="14" fill="#ddd"/><path d="M8 1 12 9H4Z" fill="#d01420"/><path d="M3 15H13V12H3Z" fill="#666"/></svg><span>AutoCAD 2012 - [...</span></div>
  <div class="task"><svg class="tk" viewBox="0 0 16 16"><circle cx="8" cy="8" r="7" fill="#3cb83c"/><path d="M3.500 8H12C12 4 4 4 4 8S11 13 12 10" stroke="#fff" stroke-width="1.700" fill="none"/></svg><span>参与/回复主题 - ...</span></div>
  <div class="lang">
    <span class="mic">M</span><span class="zhong">中</span>
    <svg class="moon" viewBox="0 0 16 16"><path d="M10 1C13 6 10 13 3 13 7 17 15 14 14 7 14 5 12 2 10 1Z" fill="#f4d84a"/></svg>
  </div>
  <span class="chevbtn"><i></i></span>
  <div class="tray">
    <span class="tzh">中</span>
    <svg viewBox="0 0 16 16"><path d="M8 1C12 5 13 12 8 15 3 12 4 5 8 1Z" fill="#a8d8f0"/><circle cx="11" cy="12" r="3.500" fill="#e84a3a"/></svg>
    <svg viewBox="0 0 16 16"><path d="M2 2H14V8C14 12 8 15 8 15S2 12 2 8Z" fill="#f4c430" stroke="#fff"/><path d="M8 4 11 7H5Z" fill="#3a9a3a"/></svg>
    <svg viewBox="0 0 16 16"><rect x="1" y="2" width="11" height="12" fill="#5a88d8"/><circle cx="10" cy="11" r="4.500" fill="#e8f0f8"/><path d="M8 11 10 13 13 9" stroke="#2a9a3a" stroke-width="1.500" fill="none"/></svg>
    <svg viewBox="0 0 16 16"><rect width="16" height="16" fill="#111"/><path d="M2 2 6 6M14 2 10 6M2 14 6 10M14 14 10 10" stroke="#fff" stroke-width="2"/></svg>
    <span class="clock">9:00</span>
  </div>
</nav>

<div class="menu">
  <div class="mlist">
    <div class="mi chk"><i></i>选择条</div>
    <div class="mi">标准</div>
    <div class="mi chk"><i></i>重复命令</div>
    <div class="mi">视图</div>
    <div class="mi">实用工具</div>
    <div class="mi">可视化</div>
    <div class="mi">电影</div>
    <div class="mi">操作记录</div>
    <div class="mi">可视报告</div>
    <div class="mi">Check-Mate</div>
    <div class="mi">应用模块</div>
    <div class="mi chk"><i></i>装配</div>
    <div class="mi">爆炸图</div>
    <div class="mi">主动数字样机</div>
    <div class="mi">知识融合</div>
    <div class="mi">重用库</div>
    <div class="mi">曲线</div>
    <div class="mi">直线和圆弧</div>
    <div class="mi">编辑曲线</div>
    <div class="mi">表</div>
    <div class="mi">标准化工具 - GC 工具箱</div>
    <div class="mi">部件文件加密 - GC 工具箱</div>
    <div class="msep"></div>
    <div class="mi">弹簧工具 - GC 工具箱</div>
    <div class="mi">齿轮建模 - GC 工具箱</div>
    <div class="mi">建模工具 - GC 工具箱</div>
    <div class="mi">加工准备 - GC 工具箱</div>
    <div class="mi chk"><i></i>图纸</div>
    <div class="mi hi">尺寸</div>
    <div class="mi">注释</div>
    <div class="mi">符号</div>
    <div class="mi">制图编辑</div>
    <div class="mi">图纸格式</div>
    <div class="mi">跟踪图纸更改</div>
    <div class="mi">草图工具</div>
    <div class="mi">船舶设计制图</div>
    <div class="msep"></div>
    <div class="mi">实体分析及参数设定 (胡波/137-14978868)</div>
    <div class="mi">实体移动复制变换(胡波/137-14978868)</div>
    <div class="mi">邦创模具标准件(胡波/137-14978868)</div>
  </div>
  <div class="mscroll"><i></i></div>
</div>

<svg class="stamp" viewBox="0 0 120 125">
  <g fill="none" stroke="#e8141c">
    <circle cx="58" cy="62" r="53" stroke-width="5" stroke-dasharray="160 6 40 3 60 8 22 3"/>
    <circle cx="58" cy="62" r="49" stroke-width="5" stroke-dasharray="0 70 170 68"/>
    <circle cx="58" cy="62" r="46" stroke-width="2" stroke-dasharray="6 90 14 50 60 6 40 30"/>
    <circle cx="58" cy="62" r="56" stroke-width="1.500" stroke-dasharray="30 12 8 20 80 16 50 14"/>
  </g>
  <g fill="#e8141c">
    <circle cx="58" cy="25" r="6"/>
    <path d="M86 27C74 42 60 46 47 37L44 32C58 36 70 31 86 27Z"/>
    <path d="M44 33C54 38 66 50 74 66L64 66C58 52 50 42 42 38Z"/>
    <path d="M60 44C56 52 50 60 40 68L34 66C42 60 48 50 52 42Z"/>
  </g>
  <text x="25" y="80" class="st1">UG爱好者</text>
  <rect x="17" y="85" width="95" height="10" fill="#e8141c"/>
  <text x="64" y="94" class="st2" text-anchor="middle">WWW.UGSNX.COM</text>
</svg>
</body>
</html>
```
FILE: styles.css
```css
* { box-sizing: border-box; }
html, body { margin: 0; padding: 0; }
body {
  width: 1440px; height: 900px; overflow: hidden; position: relative;
  display: flex; flex-direction: column;
  font: 12px "Noto Sans", "Noto Sans CJK SC", sans-serif; color: #111; background: #d8d8d8;
}
i, em { font-style: normal; display: block; }
.defs { position: absolute; }

/* title bar */
.titlebar {
  height: 26px; flex: none; display: flex; align-items: center; padding: 0 3px 0 2px;
  background: linear-gradient(#9a9a9a 0, #555 2px, #2b2b2b 4px, #181818 8px, #050505 16px, #000 26px);
}
.tlogo { width: 20px; height: 20px; margin-top: 1px; }
.ttext { font: bold 13.5px "Liberation Mono", "Noto Sans CJK SC", monospace; color: #fff; margin-left: 2px; margin-top: -1px; white-space: pre; }
.brand { margin-left: auto; margin-right: 28px; color: #fff; font: bold 14px "Open Sans", "Noto Sans", sans-serif; letter-spacing: .6px; margin-top: 2px; }
.wbtn {
  width: 20px; height: 20px; margin-left: 3px; margin-top: -4px; border-radius: 3px; border: 1px solid #777;
  background: linear-gradient(#6a6a6a, #2e2e2e); display: flex; align-items: center; justify-content: center; position: relative;
}
.wbtn.close { background: linear-gradient(#f08a5c, #d83a1c); border-color: #a84a30; }
.g-min { width: 7px; height: 3px; background: #fff; margin-top: 9px; }
.g-res { width: 9px; height: 9px; border: 1.500px solid #fff; box-shadow: 2px -2px 0 -0.5px #2e2e2e, 3px -3px 0 -0.5px #fff; margin-top: 2px; }
.x12 { width: 12px; height: 12px; }

/* menu bar */
.menubar {
  height: 27px; flex: none; display: flex; align-items: center; padding: 0 0 2px 3px;
  background: linear-gradient(#ececec, #dedede); border-bottom: 1px solid #b8b8b8;
}
.grip14 { width: 4px; height: 20px; }
.mlogo { width: 18px; height: 18px; margin-left: 1px; }
.mitems { display: flex; gap: 12px; margin-left: 4px; white-space: nowrap; color: #222; }
u { text-decoration: underline; }
.mdi { margin-left: auto; margin-right: 5px; display: flex; gap: 3px; }
.mbtn { width: 16px; height: 16px; border: 1px solid #8a8a8a; border-radius: 3px; background: linear-gradient(#f4f4f4, #d4d4d4); display: flex; align-items: center; justify-content: center; }
.m-min { width: 7px; height: 2px; background: #555; margin-top: 7px; }
.m-res { width: 8px; height: 8px; border: 1px solid #555; box-shadow: 2px -2px 0 -1px #eee, 2px -2px 0 0 #555; margin-top: 2px; }
.x10 { width: 10px; height: 10px; }

/* big toolbar */
.bigbar {
  height: 60px; flex: none; display: flex; align-items: center; padding-left: 3px; position: relative;
  background: linear-gradient(#e4e4e4, #c8c8c8); border-bottom: 1px solid #a0a0a0;
}
.grip60 { width: 4px; height: 52px; }
.bb { width: 80px; height: 56px; display: flex; flex-direction: column; align-items: center; gap: 2px; padding-top: 2px; white-space: nowrap; color: #222; }
.bb span { line-height: 14px; }
.bb.on { background: linear-gradient(#fff, #f2f2f2); border: 1px solid #777; border-radius: 3px; padding-top: 1px; }
.bi { width: 22px; height: 20px; flex: none; }
.bsep { width: 1px; height: 52px; background: #f4f4f4; box-shadow: -1px 0 0 #b8b8b8; margin: 0 2px 0 3px; }
.rgroup { position: absolute; left: 1268px; top: 22px; display: flex; align-items: center; gap: 6px; }
.ri { width: 17px; height: 17px; }
.ria { width: 17px; font: italic bold 12px "Liberation Serif", serif; color: #1a1a9a; border-bottom: 2px solid #2a3ac0; height: 17px; line-height: 12px; display: flex; font-size: 9px; }
.ria i { font-size: 14px; }
.rib { width: 17px; height: 17px; font: bold 15px/17px "Liberation Serif", serif; color: #111; }
.more { position: absolute; right: 4px; bottom: 6px; width: 0; height: 0; border: 3px solid transparent; border-top: 4px solid #111; }

/* selection bar */
.selbar {
  height: 30px; flex: none; display: flex; align-items: center; padding-left: 6px; position: relative;
  background: linear-gradient(#e2e2e2, #d2d2d2); border-bottom: 1px solid #b0b0b0;
}
.combo { height: 19px; border: 1px solid #6a6a6a; border-radius: 3px; background: #fff; display: flex; align-items: center; padding-left: 1px; white-space: nowrap; overflow: hidden; }
.combo span { flex: 1; }
.combo b { width: 17px; height: 17px; background: linear-gradient(#b8d4f8, #5a92e8); border-left: 1px solid #6a6a6a; position: relative; display: flex; align-items: center; justify-content: center; }
.combo b::after { content: ""; border: 6px solid transparent; border-top: 6px solid #222; margin-top: 5px; }
.c1 { width: 142px; }
.c2 { width: 150px; margin-left: 9px; }
.vsep { width: 1px; height: 24px; background: #f4f4f4; box-shadow: -1px 0 0 #aaa; flex: none; }
.s1 { margin: 0 1px 0 8px; }
.s2 { margin: 0 0 0 2px; }
.s3 { margin: 0 3px 0 6px; }
.ti { width: 22px; height: 21px; flex: none; display: flex; align-items: center; justify-content: center; margin-right: 1px; }
.ti svg { width: 16px; height: 16px; }
.ti.box { background: #fff; border: 1px solid #777; border-radius: 3px; }
.m3 { margin-left: 2px; }
.m5 { margin-left: 5px; }
.dn { width: 0; height: 0; border: 3px solid transparent; border-top: 4px solid #111; margin-top: 3px; flex: none; }
.d1 { margin-left: -1px; }
.d2 { margin-left: 3px; }
.more.m2 { bottom: 4px; }

/* cue line */
.cue { height: 22px; flex: none; display: flex; align-items: center; padding: 0 0 2px 3px; position: relative; background: #dedede; border-top: 1px solid #f0f0f0; }
.cue strong { font-weight: 700; white-space: nowrap; letter-spacing: .9px; }
.cdiv { position: absolute; top: 0; bottom: 0; width: 1px; background: #f4f4f4; box-shadow: -1px 0 0 #c0c0c0; }
.d-a { left: 671px; }
.d-b { left: 1342px; }
.d-c { left: 1362px; }
.flag { position: absolute; left: 1401px; top: 3px; width: 16px; height: 16px; }
.fit { position: absolute; left: 1422px; top: 3px; width: 15px; height: 15px; }

/* work area */
.work { height: 678px; flex: none; display: flex; }
.tabs { width: 28px; flex: none; background: linear-gradient(90deg, #b0b0b0, #a4a4a4); padding: 18px 0 0 6px; display: flex; flex-direction: column; gap: 1px; border-top: 1px solid #8c8c8c; }
.tab { width: 22px; height: 31px; border: 1px solid #7f7f7f; border-right: 0; border-radius: 4px 0 0 4px; background: #dcdcdc; display: flex; align-items: center; justify-content: center; }
.tab svg { width: 18px; height: 18px; }
.tab.active { height: 37px; width: 24px; margin-left: -2px; background: #eee; }
.tab.g1 { margin-top: 13px; }
.tab.g2 { margin-top: 2px; }

.panel { width: 252px; flex: none; background: #ececec; padding: 0 11px 0 5px; border-left: 1px solid #fff; border-top: 1px solid #8c8c8c; }
.phead { height: 31px; display: flex; align-items: center; padding-left: 5px; }
.pico { width: 12px; height: 12px; margin-right: 12px; }
.phead strong { font-weight: 700; }
.tree { height: 558px; border: 1px solid #808080; background: #fff; display: flex; flex-direction: column; }
.thead { height: 20px; flex: none; background: linear-gradient(#f4f4f4, #dcdcdc); border-bottom: 1px solid #bbb; display: flex; align-items: center; padding-left: 7px; }
.up { margin-left: 15px; width: 0; height: 0; border: 5px solid transparent; border-bottom: 6px solid #333; border-top: 0; }
.tbody { height: 520px; flex: none; display: flex; }
.rows { width: 217px; overflow: hidden; flex: none; }
.row { height: 20px; display: flex; align-items: center; white-space: nowrap; background-color: #fff; border-bottom: 1px solid #ececec; background-repeat: no-repeat; }
.row.alt { background-color: #f6f6f6; }
.l0 { padding-left: 6px; }
.l1 { padding-left: 25px; }
.l2 { padding-left: 44px; }
.v0 { background-image: repeating-linear-gradient(#888 0 1px, transparent 1px 2px); background-size: 1px 100%; background-position: 10px 0; }
.v1 { background-image: repeating-linear-gradient(#888 0 1px, transparent 1px 2px); background-size: 1px 100%; background-position: 29px 0; }
.v01 { background-image: repeating-linear-gradient(#888 0 1px, transparent 1px 2px), repeating-linear-gradient(#888 0 1px, transparent 1px 2px); background-size: 1px 100%; background-position: 10px 0, 29px 0; }
.v012 { background-image: repeating-linear-gradient(#888 0 1px, transparent 1px 2px), repeating-linear-gradient(#888 0 1px, transparent 1px 2px), repeating-linear-gradient(#888 0 1px, transparent 1px 2px); background-size: 1px 100%; background-position: 10px 0, 29px 0, 48px 0; }
.v012e { background-image: repeating-linear-gradient(#888 0 1px, transparent 1px 2px), repeating-linear-gradient(#888 0 1px, transparent 1px 2px), repeating-linear-gradient(#888 0 1px, transparent 1px 2px); background-size: 1px 100%, 1px 100%, 1px 50%; background-position: 10px 0, 29px 0, 48px 0; }
.exp { width: 9px; height: 9px; flex: none; border: 1px solid #7a7a7a; border-radius: 2px; background: #fff; position: relative; }
.exp::before { content: ""; position: absolute; left: 1px; top: 3px; width: 5px; height: 1px; background: #222; }
.plus::after { content: ""; position: absolute; left: 3px; top: 1px; width: 1px; height: 5px; background: #222; }
.exp.none { border: 0; background: transparent; }
.exp.none::before { display: none; }
.dash { width: 6px; height: 1px; margin-right: 1px; flex: none; background: repeating-linear-gradient(90deg, #888 0 1px, transparent 1px 2px); }
.c { width: 12px; height: 12px; flex: none; margin-right: 2px; }
.c.q { height: 16px; overflow: visible; }
.qm { font: bold 17px "Liberation Sans", sans-serif; fill: #f0d020; stroke: #222; stroke-width: .6px; }
.ic { width: 16px; height: 16px; flex: none; margin-right: 3px; }
.fo0 { margin-right: 1px; }
.t { color: #1a1a28; letter-spacing: .15px; }
.t.s2 { margin-left: 1px; }
.t.dim { color: #9c9c9c; }

.vscroll { width: 16px; flex: none; margin-left: 1px; background: #fbfbf6; display: flex; flex-direction: column; }
.sb { width: 15px; height: 15px; flex: none; background: linear-gradient(#d2defc, #b4c8f8); border: 1px solid #fff; border-radius: 3px; box-shadow: 1px 1px 0 #9aa8c8; display: flex; align-items: center; justify-content: center; color: #3a4a78; }
.ch-up, .ch-dn, .ch-l, .ch-r { width: 6px; height: 6px; border-left: 2px solid #3a4a78; border-top: 2px solid #3a4a78; }
.ch-up { transform: rotate(45deg); margin-top: 3px; }
.ch-dn { transform: rotate(225deg); margin-top: -3px; }
.ch-l { transform: rotate(-45deg); margin-left: 3px; }
.ch-r { transform: rotate(135deg); margin-left: -3px; }
.thumb { width: 15px; height: 164px; flex: none; margin-top: 1px; background: linear-gradient(90deg, #b8cafa, #c6d4fc); border: 1px solid #fff; border-radius: 3px; box-shadow: 1px 1px 0 #9aa8c8; display: flex; align-items: center; justify-content: center; }
.ridges { width: 7px; height: 7px; background: repeating-linear-gradient(#eef2ff 0 1px, #9fb0e0 1px 2px); }
.track { flex: 1; }
.hscroll { height: 16px; flex: none; display: flex; background: #fbfbf6; }
.hthumb { width: 68px; height: 15px; margin-left: 2px; background: linear-gradient(#c6d4fc, #b8cafa); border: 1px solid #fff; border-radius: 3px; box-shadow: 1px 1px 0 #9aa8c8; display: flex; align-items: center; justify-content: center; }
.hridges { width: 7px; height: 7px; background: repeating-linear-gradient(90deg, #eef2ff 0 1px, #9fb0e0 1px 2px); }
.htrack { flex: 1; }
.corner { width: 19px; background: #e8e4d4; }

.split { height: 14px; display: flex; align-items: center; gap: 5px; }
.split span { flex: 1; height: 1px; background: #b4b4b4; box-shadow: 0 1px 0 #fff; }
.split b { width: 40px; height: 6px; background: #c8c8c8; border: 1px solid #aaa; }
.acc { height: 23px; border: 1px solid #999; border-top-color: #aaa; background: linear-gradient(#f6f6f6 0, #ececec 50%, #d4d4d4 52%, #dcdcdc); display: flex; align-items: center; padding-left: 5px; }
.acc strong { flex: 1; font-weight: 700; }
.acc em { width: 22px; height: 100%; border-left: 1px solid #aaa; display: flex; align-items: center; justify-content: center; }
.chev { width: 9px; height: 9px; border-right: 3px solid #666; border-bottom: 3px solid #666; transform: rotate(45deg); margin-top: -4px; }

.gfx { flex: none; width: 1133px; margin-left: 1px; height: 678px; border: 2px solid #0000c4; border-width: 1.500px 1.500px 2px 2px; background: #fff; position: relative; overflow: hidden; }
.sheet { position: absolute; inset: 0; width: 100%; height: 100%; }
.cad text { font: 11px "Liberation Mono", monospace; fill: #444; }
.cad .tiny { font-size: 4px; fill: #333; }
.cad .sheetcap { font: 11px "Liberation Mono", "Noto Sans CJK SC", monospace; fill: #555; }

.rstrip { width: 25px; flex: none; margin-left: 1px; background: #d8d8d8; margin-top: 1px; }
.rbox { height: 183px; background: #dedede; border-bottom: 1px solid #aaa; display: flex; flex-direction: column; align-items: center; gap: 4px; padding-top: 4px; }
.rgrip { width: 15px; height: 1px; margin-bottom: 3px; border-top: 2px dotted #888; flex: none; }
.gt { width: 24px; height: 19px; background: #c6e6c8; color: #5f7f64; font-size: 12px; line-height: 19px; text-align: center; white-space: nowrap; overflow: hidden; flex: none; transform: scaleX(.67); }
.lft { width: 0; height: 0; border: 3px solid transparent; border-right: 4px solid #111; margin-right: 6px; margin-top: 4px; }

/* bottom toolbar */
.btool { height: 27px; flex: none; display: flex; align-items: center; padding-left: 3px; background: linear-gradient(#e8e8e8, #d0d0d0); }
.grip22 { width: 4px; height: 20px; }
.bt { width: 23px; height: 20px; flex: none; display: flex; align-items: center; justify-content: center; }
.bt svg { width: 18px; height: 18px; }
.spa { margin-left: 25px; }
.bsep2 { width: 1px; height: 22px; background: #f4f4f4; box-shadow: -1px 0 0 #aaa; margin: 0 3px; flex: none; }
.d3 { margin-left: 0; }
.d4 { margin-left: 6px; margin-top: 8px; }

/* taskbar */
.taskbar { height: 30px; flex: none; display: flex; align-items: center; color: #fff; background: linear-gradient(#2f72e4 0, #3a7cec 2px, #245edc 6px, #225ad4 24px, #1d4fbe 30px); }
.start { width: 95px; height: 30px; flex: none; border-radius: 0 12px 12px 0; background: linear-gradient(#4c9e4c, #3a8f3a 20%, #3c8a3c 80%, #2e6e2e); display: flex; align-items: center; padding-left: 10px; gap: 6px; font: italic 18px "Noto Sans CJK SC", sans-serif; }
.xp { width: 18px; height: 18px; }
.ql { width: 133px; flex: none; display: flex; align-items: center; padding-left: 6px; }
.qbox { width: 41px; height: 28px; background: linear-gradient(#4a8af0, #2f6ee0); border-radius: 4px; display: flex; align-items: center; justify-content: center; margin-right: 5px; }
.qbox svg { width: 20px; height: 20px; }
.qi { width: 16px; height: 16px; margin-right: 8px; flex: none; }
.task { width: 159px; height: 25px; flex: none; margin-right: 1px; background: linear-gradient(#4a8af0, #3a78e8); border-radius: 3px; display: flex; align-items: center; padding-left: 8px; gap: 5px; font: 11px "Liberation Mono", "Noto Sans CJK SC", monospace; white-space: nowrap; }
.task .zh { font: 12px "Noto Sans CJK SC", sans-serif; }
.task.cur { background: #1e4fae; box-shadow: inset 1px 1px 2px #123a88; }
.tk { width: 16px; height: 16px; flex: none; }
.lang { margin-left: auto; display: flex; align-items: center; gap: 5px; }
.mic { width: 15px; height: 17px; background: #fff; color: #d01420; font: bold 14px/17px "Liberation Sans", sans-serif; text-align: center; border: 1px solid #d01420; border-radius: 2px; }
.zhong { font-size: 14px; color: #c8dcf8; }
.moon { width: 16px; height: 16px; margin-left: 3px; }
.chevbtn { width: 14px; height: 22px; margin-left: 8px; background: #2f7ae8; border: 1px solid #d8e8ff; border-radius: 7px; display: flex; align-items: center; justify-content: center; flex: none; position: relative; z-index: 1; }
.chevbtn i { width: 6px; height: 6px; border-left: 2px solid #fff; border-bottom: 2px solid #fff; transform: rotate(45deg); margin-left: 2px; }
.tray { width: 149px; height: 30px; flex: none; margin-left: -6px; padding-left: 9px; background: linear-gradient(#1ea4f0, #108ce4 40%, #0d86de); border-left: 1px solid #0a3a9a; display: flex; align-items: center; gap: 2px; }
.tray svg { width: 16px; height: 16px; flex: none; }
.tzh { width: 16px; height: 18px; background: #f08a10; color: #fff; font: bold 13px/18px "Noto Sans CJK SC", sans-serif; text-align: center; flex: none; }
.clock { margin-left: 9px; font: 11px "Liberation Mono", monospace; }

/* tool bar context menu */
.menu { position: absolute; left: 977px; top: 2px; width: 294px; height: 864px; background: #ebebeb; border: 1px solid #8a8a8a; box-shadow: 3px 3px 3px rgba(0,0,0,.55); display: flex; flex-direction: column; padding: 1px; font-family: "DejaVu Sans", "Noto Sans CJK SC", sans-serif; }
.mlist { height: 843px; flex: none; overflow: hidden; }
.mi { height: 22px; line-height: 23px; padding-left: 27px; position: relative; margin-right: 1px; white-space: pre; color: #1c1c1c; }
.chk i { position: absolute; left: 0; top: 0; width: 22px; height: 22px; border: 1px solid #5b95ff; }
.chk i::after { content: ""; position: absolute; left: 6px; top: 3px; width: 6px; height: 11px; border-right: 3px solid #111; border-bottom: 3px solid #111; transform: rotate(40deg); }
.hi { background: #5b95ff; color: #fff; margin-right: 2px; }
.msep { height: 1px; background: #bdbdbd; margin: 3px 26px 4px 11px; }
.mscroll { height: 15px; flex: none; margin-right: 2px; background: #ebe8d8; border: 1px solid #fff; border-right-color: #999; border-bottom-color: #999; display: flex; align-items: center; justify-content: center; }
.mscroll i { width: 0; height: 0; border: 5px solid transparent; border-top: 6px solid #111; border-bottom: 0; }

/* watermark */
.stamp { position: absolute; left: 11px; top: 770px; width: 120px; height: 125px; overflow: visible; pointer-events: none; }
.st1 { font: bold 17px "Liberation Sans", "Noto Sans CJK SC", sans-serif; fill: #e8141c; letter-spacing: .5px; }
.st2 { font: bold 9.5px "Liberation Sans", sans-serif; fill: #fff; }
```
